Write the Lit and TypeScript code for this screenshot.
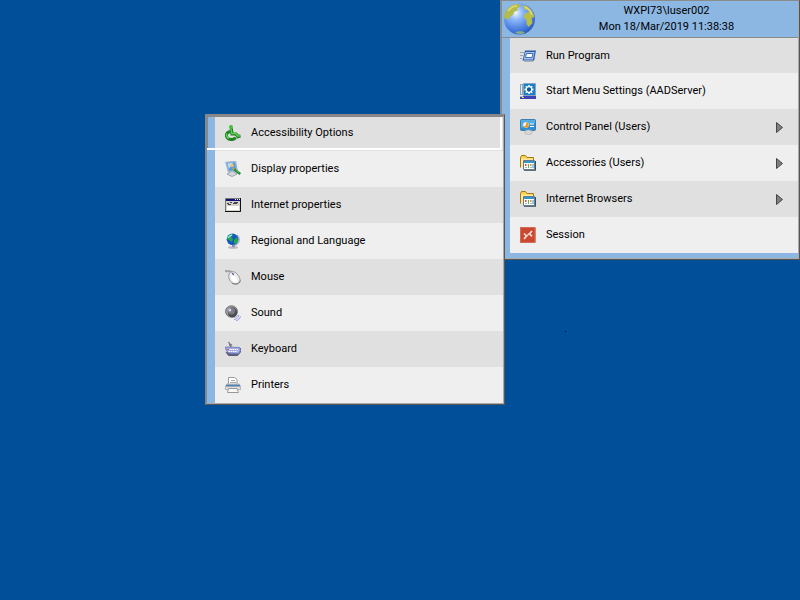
import { LitElement, html, svg, css } from "lit";
import { customElement, property } from "lit/decorators.js";

const icons: Record<string, unknown> = {
  run: svg`<path d="M0 4.500h4M0 7.500h3M0 10.500h2" stroke="#9aa5b5"/><path d="M4 13.500h9l2-4" fill="none" stroke="#a9b0bd"/><path d="M5 2.500h11l-2 10H2.500z" fill="#2c5ba8"/><path d="M5.500 4h9l-1.500 7.500H3.700z" fill="#a9c8f0"/><path d="M6.500 5.500h6.500l-1 4H5.500z" fill="#fff" stroke="#3c6fb8"/>`,
  settings: svg`<path d="M0 1h3v11H0z" fill="#8ca4b8"/><path d="M1 2h1v9H1z" fill="#e5eef5"/><path d="M3.500.500h12v12h-12z" fill="#1680cd" stroke="#8ba4bb"/><circle cx="9" cy="6.500" r="2.800" fill="#0b58a0" stroke="#fff" stroke-width="1.300"/><path d="M9 2v1.500M9 9.500V11M4.500 6.500H6M12 6.500h1.500M5.800 3.300l1 1M11.200 8.700l1 1M5.800 9.700l1-1M11.200 4.300l1-1" stroke="#fff" stroke-width="1.500"/><path d="M0 13h16v3H0z" fill="#3d43b5"/><path d="M0 13h3v1H0z" fill="#aeb8d5"/><path d="M2 14h2v1H2z" fill="#ffe044"/>`,
  control: svg`<rect x=".5" y=".5" width="15" height="11" rx="1" fill="#2c8fd3" stroke="#407da9"/><path d="M1 1h14v3L1 9z" fill="#72c5ef" opacity=".6"/><circle cx="6" cy="6" r="2.800" fill="#fff"/><path d="M6 6V3.200a2.800 2.800 0 1 1-2.400 4.200z" fill="#f19b27"/><path d="M10 5h4M10 7.500h4" stroke="#fff"/><ellipse cx="8.500" cy="13.200" rx="3.800" ry="2.300" fill="#d8d8d8" stroke="#aaa" stroke-width=".6"/>`,
  folder: svg`<path d="M.5 12.500V2.500l1-2h4l1.500 2h6.500V6" fill="#f7ce56" stroke="#a87810"/><path d="M1 12V3.500h12V5H4v8z" fill="#ffe79a"/><path d="M4 15.200h11.300V6" fill="none" stroke="#344a5a" stroke-width="1.300"/><path d="M3.500 5.500h11v9h-11z" fill="#fff" stroke="#647b8c"/><path d="M4 6h10v2H4z" fill="#3494cc"/><path d="M5 9h1.500v2H5z" fill="#e84a39"/><path d="M8 9h1v4H8z" fill="#63ad51"/><path d="M10 9h1.500v2H10z" fill="#e09a35"/><path d="M12.500 9h1v4h-1z" fill="#358ed3"/><path d="M5 12h2v1H5zM10 12h2v1h-2z" fill="#9db9c8"/>`,
  session: svg`<rect width="15.500" height="16" rx="1" fill="#c9482f"/><path d="M.5.500h14.500v15H.5z" fill="none" stroke="#d06b55"/><path d="M4 6.500l2.500 2.500L4 12M12 4L9.500 6.800l2.500 2.500" fill="none" stroke="#f8ddd7" stroke-width="1.700"/><path d="M6.500 9l3-2.300" stroke="#f0cbc2" stroke-width="1.500"/>`,
  access: svg`<path d="M3 14.500c4 2 9 0 12-2.500" fill="none" stroke="#999" opacity=".7"/><circle cx="6" cy="2" r="2" fill="#43bd3c"/><path d="M6.200 3.500l.8 5.500h4l2 2.500 2.500-.5" fill="none" stroke="#1a7d1e" stroke-width="3.200"/><path d="M5 6.500C1.500 7.500.7 10 2 12.300c2 3 7 3 8.500 0" fill="none" stroke="#1d8322" stroke-width="3"/><path d="M6 3.500l.8 5h4l2 2.500 2 0M2 8.500c-1 2 0 4 2 5" fill="none" stroke="#5cd650" stroke-width="1.300"/>`,
  display: svg`<path d="M2 13l5-3 5 3-5 2.500z" fill="#d4d7de" stroke="#9ba2b0"/><path d="M1 1.500l9.500-1 1.500 9-8.500 1z" fill="#4e9ee6" stroke="#a2b4ca" stroke-width="1.500"/><path d="M2.500 2.500l5.500-.7-4 6z" fill="#b9e0ff"/><circle cx="7" cy="4.500" r="1.700" fill="#ffc05a"/><path d="M7.500 7l3 2" stroke="#d09a4a" stroke-width="2"/><path d="M10 7.500l6 4.500-1.500 2-6-4.500z" fill="#23822d"/><path d="M10.500 9l4 3" stroke="#57b65a"/>`,
  internet: svg`<path d="M.5 1.500h15v13H.5z" fill="#d5d1ca" stroke="#777"/><path d="M1 2h14v2H1z" fill="#10127c"/><path d="M10 2h1v1h-1zM12 2h1v1h-1zM14 2h1v1h-1z" fill="#fff"/><path d="M2 6.500h2M5 5.500h2M8 6.500h4M3 7.500h3M9 5.500h4" stroke="#444"/><path d="M2 9h12v4H2z" fill="#fff"/><path d="M0 14.500h15.500V1" fill="none" stroke="#111"/>`,
  region: svg`<ellipse cx="8" cy="14.500" rx="5" ry="1.300" fill="#b9b9c5"/><path d="M7 12h3v2H7z" fill="#8b8ea5"/><path d="M12 2c4 4 2 9-3 10.500" fill="none" stroke="#a9b0c5" stroke-width="1.500"/><circle cx="7.500" cy="6.300" r="5.800" fill="#1557bd"/><path d="M3 3c2-3 6-2 5-1L6 4l2 2-1 3-3-2-2-1zM9 7l3-3 1 4-2 3-2-1z" fill="#22a94b"/><path d="M3 5c1-2 2-2.500 4-3" stroke="#8fe3e8" fill="none" stroke-width="1.500"/>`,
  mouse: svg`<path d="M7 4C5 0 3 4 0 1.500" fill="none" stroke="#a0a0a0" stroke-width="2"/><path d="M4 5c2-3 6-3 8 0 2 2 3.500 4.500 3 7-1 3.500-6 4-8.500 1.500C4.500 11.500 3 8 4 5z" fill="#ececea" stroke="#999"/><path d="M6 6.500c3-1 5 1 6 4s-2 4-4 2-3-4-2-6z" fill="#fff"/><path d="M7 14c3 2 8 1 8.300-2.500" fill="none" stroke="#777"/><path d="M7.500 4l1 2" stroke="#5360ad" stroke-width="1.500"/>`,
  sound: svg`<ellipse cx="6.500" cy="6.500" rx="6" ry="5.700" fill="#999" stroke="#777"/><ellipse cx="7.500" cy="7.500" rx="4.500" ry="5" fill="#4c4c4c"/><ellipse cx="6.500" cy="6" rx="3.500" ry="3.500" fill="#7c7c88"/><circle cx="4.800" cy="5" r="1.500" fill="#d4d4fa"/><path d="M9 12.500c2 0 3-1 3.500-2.500M9 14.500c3 0 4.500-2 5-4.500M11 15.500c2.500 0 4-2 4.500-4" fill="none" stroke="#9a9be0"/>`,
  keyboard: svg`<path d="M7 6.500C4 5 4 2 6 3.500S5 4 3.500 1" fill="none" stroke="#777" stroke-width="1.300"/><path d="M1 11l2.500 3.500h9L15.500 11V7" fill="#60647f" stroke="#555a78"/><path d="M.5 6l14 .5 1 3-2 3-10-.5L1 9z" fill="#a4aee6" stroke="#7880b8"/><path d="M3 8.500h10M3.500 10.500h9" stroke="#fff" stroke-dasharray="1.500 .7"/><path d="M2 8h2v1H2z" fill="#e65454"/>`,
  printer: svg`<path d="M3.500 7.500V.500h6l2.500 2V7.500" fill="#fff" stroke="#999"/><path d="M6 3.500h4M5 5.500h6" stroke="#a9a9a9"/><path d="M0 9l2-2.500h12L16 9v4H0z" fill="#b5b7ba"/><path d="M1 8.500h14" stroke="#4f82b5" stroke-width="1.500"/><path d="M1 10h14v2H1z" fill="#dedede"/><path d="M3.500 11.500h8.500l1.500 4H2.500z" fill="#f8f8f8" stroke="#999"/>`,
};

@customElement("menu-entry")
class MenuEntry extends LitElement {
  @property() icon = "";
  @property() label = "";
  @property({ type: Boolean }) branch = false;
  static styles = css`
    :host { display: block; height: 36px; background: #efefef; }
    :host(.shade) { background: #e0e0e0; }
    :host(.active) { height: 33px; margin-right: 1px; margin-bottom: 1px; margin-left: -8px;
      box-sizing: border-box; border: solid #fff; border-width: 0 2px 2px 0;
      background: linear-gradient(to right, #888 1px, #8cb7e3 1px, #8cb7e3 8px, #e0e0e0 8px); }
    :host(.active) button { padding-left: 18px; }
    button { display: flex; align-items: center; gap: 10px; width: 100%; height: 100%;
      padding: 0 15px 0 10px; border: 0; background: none; color: #000; text-align: left;
      font: 11px/16px Roboto, "Liberation Sans", sans-serif; white-space: nowrap; }
    svg { flex: none; }
    .label { flex: 1; }
  `;
  render() {
    return html`<button type="button" role="menuitem">
      <svg width="16" height="16" viewBox="0 0 16 16" aria-hidden="true">${icons[this.icon]}</svg>
      <span class="label">${this.label}</span>
      ${this.branch
        ? html`<svg width="7" height="11" viewBox="0 0 7 11" aria-hidden="true"><path d="M.5.500v10l6-5z" fill="#808080" stroke="#444"/></svg>`
        : ""}
    </button>`;
  }
}

@customElement("app-root")
class AppRoot extends LitElement {
  static styles = css`
    :host { display: block; position: relative; min-height: 100vh; overflow: hidden; background: #004f98;
      font: 11px/16px Roboto, "Liberation Sans", sans-serif; color: #000; }
    .menu { position: absolute; box-sizing: border-box; width: 300px; background: #8cb7e3; }
    .start { top: 0; right: 0; border: 1px solid #8b8b8b; border-left-width: 2px;
      border-right: 2px ridge #aaa; border-bottom: 2px ridge #aaa; }
    header { display: flex; align-items: center; height: 36px; border-bottom: 1px solid #8b8b8b; }
    .globe { flex: none; margin-left: 1px; }
    .who { flex: 1; text-align: center; }
    .who div { line-height: 16px; }
    .start .items { margin: 0 0 5px 8px; }
    .start .items menu-entry:first-child { height: 35px; }
    .sub { top: 114px; right: 295px; border: 2px solid #888; border-top-width: 3px;
      border-right: 2px ridge #aaa; border-bottom: 2px ridge #aaa; }
    .sub .items { margin-left: 8px; background: #e0e0e0; }
    .cursor { position: absolute; left: 565px; top: 331px; width: 1px; height: 1px; background: #000; }
  `;
  render() {
    const main = [["run", "Run Program"], ["settings", "Start Menu Settings (AADServer)"], ["control", "Control Panel (Users)"],
      ["folder", "Accessories (Users)"], ["folder", "Internet Browsers"], ["session", "Session"]];
    const sub = [["access", "Accessibility Options"], ["display", "Display properties"], ["internet", "Internet properties"],
      ["region", "Regional and Language"], ["mouse", "Mouse"], ["sound", "Sound"], ["keyboard", "Keyboard"], ["printer", "Printers"]];
    return html`
      <nav class="menu start" aria-label="Start">
        <header>
          <svg class="globe" width="32" height="34" viewBox="0 0 32 34" aria-hidden="true">
            <defs><radialGradient id="sea" cx=".38" cy=".3" r=".75"><stop offset="0" stop-color="#eef5ff"/><stop offset=".3" stop-color="#8db8fa"/><stop offset=".8" stop-color="#3f74da"/><stop offset="1" stop-color="#2853ad"/></radialGradient></defs>
            <circle cx="16.500" cy="17" r="15.500" fill="url(#sea)"/>
            <path d="M3 9C6 4 11 1.500 16 2l1 3-3 1 1 2-4 2-1 3-3 2-2 3-2-2-2 1c0-3 0-4 2-8z" fill="#b3bb4e"/>
            <path d="M20 3c6 1 10 6 11.500 12l-3 1 1 5-4 4-2-3v-4l-3-3 2-4 4-1-2-3-3 1-1-3z" fill="#b9be47"/>
            <path d="M5 9c3-4 7-5 9-5M22 5c4 2 6 5 7 8" fill="none" stroke="#e0dc6a" stroke-width="1.500"/>
            <path d="M12 30.500c4-2 8-1 10 0-3 2-7 2-10 0z" fill="#86a98c"/>
          </svg>
          <div class="who"><div>WXPI73\\luser002</div><div>Mon 18/Mar/2019 11:38:38</div></div>
        </header>
        <div class="items" role="menu">
          ${main.map(([i, l], n) => html`<menu-entry class=${n % 2 ? "" : "shade"} .icon=${i} .label=${l} .branch=${n > 1 && n < 5}></menu-entry>`)}
        </div>
      </nav>
      <nav class="menu sub" aria-label="Control Panel">
        <div class="items" role="menu">
          ${sub.map(([i, l], n) => html`<menu-entry class=${n === 0 ? "active" : n % 2 ? "" : "shade"} .icon=${i} .label=${l}></menu-entry>`)}
        </div>
      </nav>
      <div class="cursor"></div>`;
  }
}
